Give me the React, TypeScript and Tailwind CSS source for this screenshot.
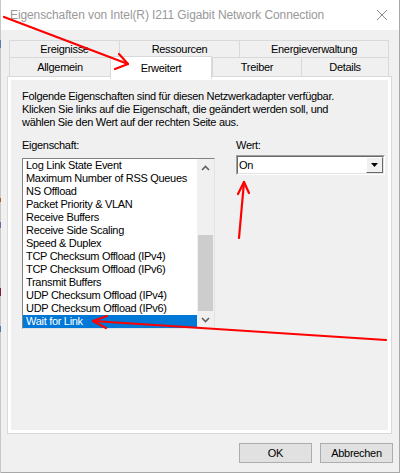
import React from "react";

const items = [
  "Log Link State Event",
  "Maximum Number of RSS Queues",
  "NS Offload",
  "Packet Priority & VLAN",
  "Receive Buffers",
  "Receive Side Scaling",
  "Speed & Duplex",
  "TCP Checksum Offload (IPv4)",
  "TCP Checksum Offload (IPv6)",
  "Transmit Buffers",
  "UDP Checksum Offload (IPv4)",
  "UDP Checksum Offload (IPv6)",
  "Wait for Link",
];

const font = { fontFamily: '"Liberation Sans", Arial, sans-serif' };

export default function App() {
  return (
    <div
      className="relative w-[400px] h-[473px] overflow-hidden flex bg-[#f0f0f0] text-[11px] tracking-[-0.3px] text-black"
      style={font}
    >
      {/* desktop sliver */}
      <div className="w-px h-full flex flex-col bg-[#c8c8c8]">
        <div className="h-[40px]" />
        <div className="h-[8px] bg-[#5a7fa8]" />
        <div className="h-[150px]" />
        <div className="h-[4px] bg-[#a06030]" />
        <div className="h-[20px]" />
        <div className="h-[6px] bg-[#8060a0]" />
        <div className="h-[60px]" />
        <div className="h-[8px] bg-[#7a2040]" />
        <div className="h-[30px]" />
        <div className="h-[6px] bg-[#4a7ab0]" />
      </div>

      {/* window */}
      <div className="flex-1 flex flex-col border-r border-r-[#a8a8a8] border-b border-b-[#a8a8a8]">
        {/* title bar */}
        <div className="h-[30px] bg-white flex items-center pl-[9px] pr-[10px] shrink-0">
          <span className="text-[12px] tracking-[-0.1px] text-[#999999] flex-1">
            Eigenschaften von Intel(R) I211 Gigabit Network Connection
          </span>
          <svg width="12" height="12" viewBox="0 0 12 12" className="mr-[1px]">
            <path d="M1 1 L11 11 M11 1 L1 11" stroke="#8a8a8a" strokeWidth="1" />
          </svg>
        </div>

        {/* body */}
        <div className="flex-1 flex flex-col pl-[6px] pr-[5px] pt-[10px]">
          {/* tabs */}
          <div className="ml-[2px] w-[380px] flex flex-col">
            <div className="flex h-[17px]">
              <div className="w-[110px] border-t border-l border-[#d9d9d9] flex items-center justify-center pt-[1px]">
                Ereignisse
              </div>
              <div className="w-[120px] border-t border-l border-[#d9d9d9] flex items-center justify-center pt-[1px]">
                Ressourcen
              </div>
              <div className="w-[150px] border-t border-l border-r border-[#d9d9d9] flex items-center justify-center pt-[1px]">
                Energieverwaltung
              </div>
            </div>
            <div className="flex h-[19px] border-t border-[#d9d9d9] relative">
              <div className="w-[101px] border-l border-[#d9d9d9] flex items-center justify-center pt-[1px]">
                Allgemein
              </div>
              <div className="w-[102px] flex items-center justify-center relative">
                <div className="absolute left-0 right-0 top-[-2px] bottom-[-3px] bg-white border-t border-l border-r border-[#d9d9d9] z-10 flex justify-center pt-[3px]">
                  Erweitert
                </div>
              </div>
              <div className="w-[89px] border-l border-[#d9d9d9] flex items-center justify-center pt-[1px]">
                Treiber
              </div>
              <div className="w-[88px] border-l border-r border-[#d9d9d9] flex items-center justify-center pt-[1px]">
                Details
              </div>
            </div>
          </div>

          {/* panel */}
          <div className="w-[385px] h-[358px] border border-[#d9d9d9] bg-white p-[3px] flex">
            <div className="flex-1 bg-[#f0f0f0] pl-[11px] pt-[10px] flex flex-col">
              <div className="leading-[13px]">
                <div>Folgende Eigenschaften sind für diesen Netzwerkadapter verfügbar.</div>
                <div>Klicken Sie links auf die Eigenschaft, die geändert werden soll, und</div>
                <div>wählen Sie den Wert auf der rechten Seite aus.</div>
              </div>

              <div className="flex mt-[10px] gap-[21px]">
                {/* left column */}
                <div className="w-[193px] flex flex-col">
                  <div className="leading-[13px] h-[13px]">Eigenschaft:</div>
                  <div className="mt-[6px] h-[171px] flex border border-t-[#828282] border-l-[#828282] border-b-[#e3e3e3] border-r-[#e3e3e3] bg-white">
                    <div className="w-[174px] flex flex-col">
                      {items.map((t, i) => (
                        <div
                          key={t}
                          className={
                            "h-[13px] leading-[13px] pl-[3px] whitespace-nowrap " +
                            (i === items.length - 1 ? "bg-[#0078d7] text-white" : "text-black")
                          }
                        >
                          {t}
                        </div>
                      ))}
                    </div>
                    <div className="w-[17px] bg-[#f0f0f0] flex flex-col">
                      <div className="h-[17px] flex items-center justify-center">
                        <svg width="9" height="6" viewBox="0 0 9 6">
                          <path d="M1 5 L4.5 1.5 L8 5" stroke="#606060" strokeWidth="1.6" fill="none" />
                        </svg>
                      </div>
                      <div className="h-[59px]" />
                      <div className="h-[76px] mx-[1px] bg-[#cdcdcd]" />
                      <div className="h-[17px] flex items-center justify-center">
                        <svg width="9" height="6" viewBox="0 0 9 6">
                          <path d="M1 1 L4.5 4.5 L8 1" stroke="#606060" strokeWidth="1.6" fill="none" />
                        </svg>
                      </div>
                    </div>
                  </div>
                </div>

                {/* right column */}
                <div className="w-[149px] flex flex-col">
                  <div className="leading-[13px] h-[13px]">Wert:</div>
                  <div className="mt-[3px] h-[20px] border border-t-[#a0a0a0] border-l-[#a0a0a0] border-b-white border-r-white">
                    <div className="h-full border border-t-[#696969] border-l-[#696969] border-b-[#e3e3e3] border-r-[#e3e3e3] bg-white flex items-center">
                      <span className="flex-1 pl-[1px] leading-[13px]">On</span>
                      <div className="w-[17px] h-full bg-[#f0f0f0] border border-t-white border-l-white border-b-[#696969] border-r-[#696969] flex items-center justify-center">
                        <svg width="7" height="4" viewBox="0 0 7 4">
                          <path d="M0 0 L7 0 L3.5 4 Z" fill="#000" />
                        </svg>
                      </div>
                    </div>
                  </div>
                </div>
              </div>
            </div>
          </div>

          {/* buttons */}
          <div className="flex justify-end gap-[8px] mt-[9px] pr-[1px]">
            <button className="w-[73px] h-[20px] bg-[#e1e1e1] border border-[#adadad] text-[11px] leading-[13px]">
              OK
            </button>
            <button className="w-[73px] h-[20px] bg-[#e1e1e1] border border-[#adadad] text-[11px] leading-[13px]">
              Abbrechen
            </button>
          </div>
        </div>
      </div>

      {/* red annotation arrows */}
      <svg
        className="absolute inset-0 pointer-events-none z-20"
        width="400"
        height="473"
        viewBox="0 0 400 473"
      >
        <g stroke="#ff0000" strokeWidth="2.2" fill="none" strokeLinecap="round" strokeLinejoin="round">
          <path d="M4 17 L128 64" />
          <path d="M115 69 L128 64 L119 54" />
          <path d="M239 238 L244 182" />
          <path d="M238 194 L244 182 L249 193" />
          <path d="M386 340 L93 321" />
          <path d="M106 328 L93 321 L107 316" />
        </g>
      </svg>
    </div>
  );
}
